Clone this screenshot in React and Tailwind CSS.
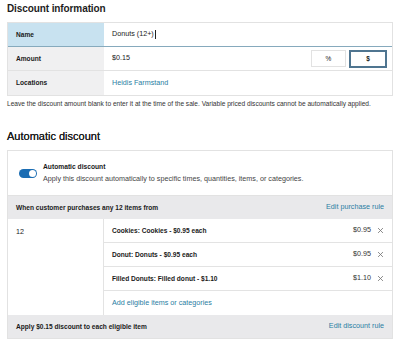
const font = { fontFamily: '"Liberation Sans", Arial, sans-serif' };

function ItemRow({ label, price }) {
  return (
    <div className="h-6 flex items-center justify-between pl-2 pr-[8px] border-b border-[#e3e3e3]">
      <span className="font-bold text-[6.6px] text-[#1a1a1a]">{label}</span>
      <span className="flex items-center gap-[6px] text-[7.2px] text-[#333]">
        {price}
        <svg width="7" height="7" viewBox="0 0 10 10" className="text-[#777]">
          <path d="M1.5 1.5l7 7M8.5 1.5l-7 7" stroke="currentColor" strokeWidth="1.2" fill="none" />
        </svg>
      </span>
    </div>
  );
}

export default function App() {
  return (
    <div className="w-[400px] h-[345px] overflow-hidden bg-white text-[#1a1a1a]" style={font}>
      <div className="px-[7px]">
        <h1 className="text-[10px] font-bold leading-4 pt-[1px] tracking-[-0.1px] text-[#1d1d1d]">Discount information</h1>

        <div className="mt-[5px] border border-[#e2e2e2] text-[7.2px]">
          <div className="h-6 flex border-b border-[#86aabd]">
            <div className="w-[96px] bg-[#c8e2f0] flex items-center pl-2 font-bold text-[6.6px]">Name</div>
            <div className="flex-1 flex items-center pl-2">Donuts (12+)<span className="w-px h-[9px] bg-[#222] ml-px" /></div>
          </div>
          <div className="h-6 flex border-b border-[#e2e2e2]">
            <div className="w-[96px] bg-[#f0f0f1] flex items-center pl-2 font-bold text-[6.6px]">Amount</div>
            <div className="flex-1 flex items-center pl-2 pr-[5px] gap-[3px]">
              <span className="flex-1">$0.15</span>
              <span className="w-[35px] h-[17px] border border-[#e2e2e2] flex items-center justify-center text-[6.5px]">%</span>
              <span className="w-[38px] h-[18px] border-2 border-[#4f7590] flex items-center justify-center text-[6.5px] font-bold">$</span>
            </div>
          </div>
          <div className="h-6 flex">
            <div className="w-[96px] bg-[#f0f0f1] flex items-center pl-2 font-bold text-[6.6px]">Locations</div>
            <div className="flex-1 flex items-center pl-2 text-[#2a7ea3]">Heidis Farmstand</div>
          </div>
        </div>

        <p className="text-[6.6px] leading-[10px] mt-[3px] text-[#333] whitespace-nowrap">
          Leave the discount amount blank to enter it at the time of the sale. Variable priced discounts cannot be automatically applied.
        </p>

        <h2 className="text-[11px] font-medium leading-4 mt-[19px] text-[#1d1d1d] [text-shadow:0_0_0.3px_#1d1d1d]">Automatic discount</h2>

        <div className="mt-[6px] border border-[#e2e2e2]">
          <div className="h-[45px] flex items-center pl-[11px] gap-[6px] border-b border-[#e2e2e2]">
            <span className="w-[18px] h-[9px] rounded-full bg-[#1b6db3] flex items-center justify-end pr-[1px] mt-[1px]">
              <span className="w-[7px] h-[7px] rounded-full bg-white" />
            </span>
            <div className="leading-[12px]">
              <div className="text-[6.7px] font-bold">Automatic discount</div>
              <div className="text-[7.2px] text-[#444]">Apply this discount automatically to specific times, quantities, items, or categories.</div>
            </div>
          </div>

          <div className="h-[23px] bg-[#e9e9eb] flex items-center justify-between pl-2 pr-[8px] text-[7.2px]">
            <span className="font-bold text-[6.6px]">When customer purchases any 12 items from</span>
            <span className="text-[#2a7ea3]">Edit purchase rule</span>
          </div>

          <div className="flex">
            <div className="w-[96px] border-r border-[#e3e3e3] pl-2 pt-[8px] text-[7.2px]">12</div>
            <div className="flex-1">
              <ItemRow label="Cookies: Cookies - $0.95 each" price="$0.95" />
              <ItemRow label="Donut: Donuts - $0.95 each" price="$0.95" />
              <ItemRow label="Filled Donuts: Filled donut - $1.10" price="$1.10" />
              <div className="h-6 flex items-center pl-2 text-[7.2px] text-[#2a7ea3]">Add eligible items or categories</div>
            </div>
          </div>

          <div className="h-[23px] bg-[#e9e9eb] flex items-center justify-between pl-2 pr-[8px] text-[7.2px]">
            <span className="font-bold text-[6.6px]">Apply $0.15 discount to each eligible item</span>
            <span className="text-[#2a7ea3]">Edit discount rule</span>
          </div>
        </div>

        <p className="text-[6.6px] leading-[10px] mt-[5px] text-[#333] whitespace-nowrap">
          If multiple automatic discounts are applicable, the greater discount will be applied. <span className="text-[#2a7ea3]">Learn more</span>
        </p>
      </div>
    </div>
  );
}
